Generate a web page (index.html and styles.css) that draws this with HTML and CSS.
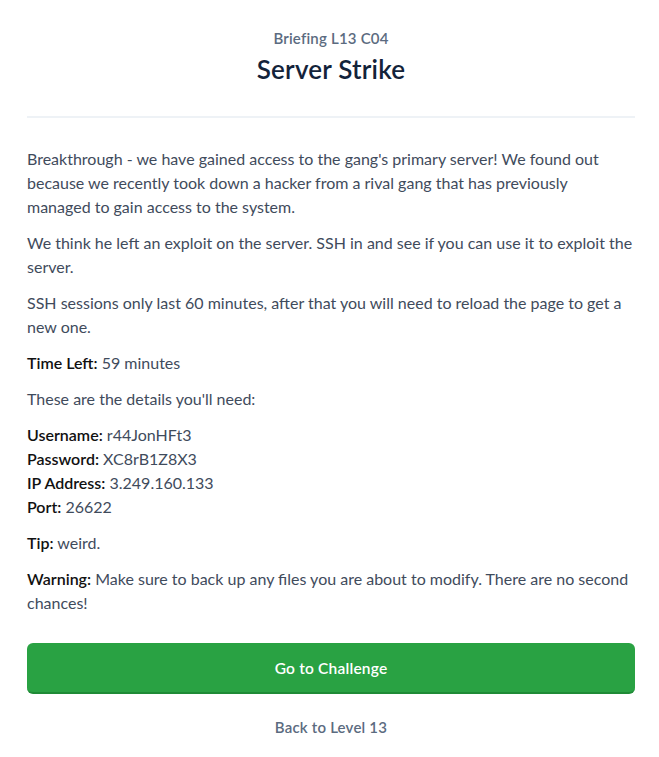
FILE: index.html
```html
<!DOCTYPE html>
<html>
<head>
<meta charset="utf-8">
<link rel="stylesheet" href="styles.css">
</head>
<body>
<div class="page">
  <header class="head">
    <div class="kicker">Briefing L13 C04</div>
    <h1 class="title">Server Strike</h1>
  </header>
  <div class="body">
    <p>Breakthrough - we have gained access to the gang's primary server! We found out because we recently took down a hacker from a rival gang that has previously managed to gain access to the system.</p>
    <p>We think he left an exploit on the server. SSH in and see if you can use it to exploit the server.</p>
    <p>SSH sessions only last 60 minutes, after that you will need to reload the page to get a new one.</p>
    <p><b>Time Left:</b> 59 minutes</p>
    <p>These are the details you'll need:</p>
    <p><b>Username:</b> r44JonHFt3<br><b>Password:</b> XC8rB1Z8X3<br><b>IP Address:</b> 3.249.160.133<br><b>Port:</b> 26622</p>
    <p><b>Tip:</b> weird.</p>
    <p><b>Warning:</b> Make sure to back up any files you are about to modify. There are no second chances!</p>
  </div>
  <a class="btn">Go to Challenge</a>
  <a class="back">Back to Level 13</a>
</div>
</body>
</html>
```
FILE: styles.css
```css
html, body { margin: 0; padding: 0; background: #fff; }
body { font-family: "Lato", "Liberation Sans", sans-serif; }
.page { padding: 27px 24px 0 27px; }
.head { text-align: center; padding-bottom: 31px; border-bottom: 2px solid #eef2f6; }
.kicker { font-size: 15px; font-weight: 600; color: #5b6b80; line-height: 22px; letter-spacing: 0.2px; }
.title { margin: 4px 0 0; font-size: 26px; font-weight: 600; color: #13233a; line-height: 32px; letter-spacing: 0.2px; }
.body { padding-top: 29px; font-size: 16px; line-height: 24px; color: #3f4b5c; }
.body p { margin: 0 0 12px; }
.body b { color: #111; font-weight: 600; }
.btn { display: block; margin-top: 28px; height: 49px; line-height: 50px; background: #29a243; border-bottom: 2px solid #1f8a36; border-radius: 6px; color: #fff; text-align: center; font-weight: 600; font-size: 15.5px; letter-spacing: 0.2px; }
.back { display: block; text-align: center; margin-top: 21px; font-size: 15px; font-weight: 600; color: #5b6b80; line-height: 24px; letter-spacing: 0.2px; }
```
